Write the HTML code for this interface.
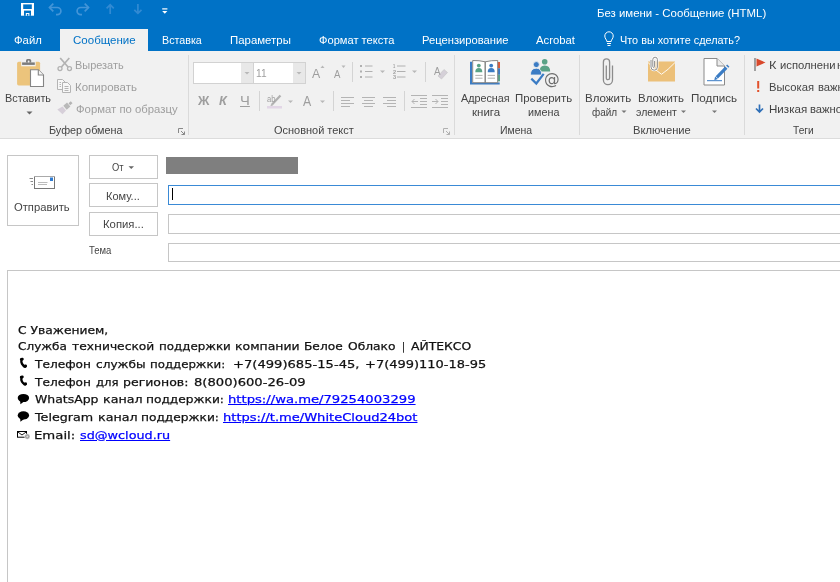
<!DOCTYPE html>
<html lang="ru"><head><meta charset="utf-8"><title>Без имени - Сообщение (HTML)</title>
<style>
*{box-sizing:border-box;margin:0;padding:0}
html,body{width:840px;height:582px;overflow:hidden;background:#fff}
body{position:relative;font-family:"Liberation Sans",sans-serif;font-size:11.5px;color:#444}
.abs{position:absolute;white-space:nowrap}
#title{left:0;top:0;width:840px;height:51px;background:#0072c6}
#ribbon{left:0;top:51px;width:840px;height:88px;background:#f1f1f1;border-bottom:1px solid #dcdcdc}
.tab{color:#fff;font-size:11.5px;top:33px;line-height:14px}
#tabsel{left:60px;top:28.5px;width:88px;height:22.5px;background:#f1f1f1}
.rt{font-size:11.5px;line-height:14px;color:#444}
.dis{color:#a0a0a0}
.sep{width:1px;background:#dadada;top:55px;height:80px}
.btn{border:1px solid #c6c6c6;background:#fff;text-align:center;color:#444;font-size:11.5px}
.fld{border:1px solid #c6c6c6;background:#fff;left:168px;width:680px}
#msg{left:7px;top:270px;width:840px;height:320px;border:1px solid #c6c6c6;background:#fff}
#sig{left:17px;top:322px;font-family:"DejaVu Sans","Liberation Sans",sans-serif;font-size:11px;line-height:17.5px;color:#000}
#sig a{color:#0000ee}
.sg{font-family:"DejaVu Sans","Liberation Sans",sans-serif;font-size:11.5px;line-height:16px;color:#111;transform-origin:0 0}
.lk{color:#0000ee;text-decoration:underline}
</style></head><body><div id="root" style="position:absolute;left:0;top:0;width:840px;height:582px;will-change:transform">
<div id="title" class="abs"></div>
<div id="tabsel" class="abs"></div>
<div id="ribbon" class="abs"></div>

<!-- QAT -->
<svg class="abs" style="left:0;top:0" width="200" height="28" viewBox="0 0 200 28">
<rect x="21" y="3" width="13" height="12.700" fill="#fff"/>
<rect x="23.200" y="4.400" width="8.600" height="4.600" fill="#0072c6"/>
<rect x="24" y="10.600" width="7" height="5.200" fill="#0072c6"/>
<rect x="25.800" y="13" width="3.600" height="2.800" fill="#fff"/><rect x="26.900" y="14" width="1.400" height="1.800" fill="#0072c6"/>
<g fill="none" stroke="#4395d8" stroke-width="1.700">
<path d="M49.500 7.500 H57.300 A3.600 3.600 0 0 1 57.300 14.700 H56"/><path d="M53.300 3.700 L49.500 7.500 L53.300 11.300"/>
<path d="M88.500 7.500 H80.700 A3.600 3.600 0 0 0 80.700 14.700 H82"/><path d="M84.700 3.700 L88.500 7.500 L84.700 11.300"/>
</g>
<g fill="none" stroke="#318ad3" stroke-width="1.700">
<path d="M110.200 14 V4.800 M106.600 8.400 L110.200 4.800 L113.800 8.400"/>
<path d="M137.900 4 V13.400 M134.300 9.800 L137.900 13.400 L141.500 9.800"/>
</g>
<rect x="162.200" y="8.300" width="5.200" height="1.200" fill="#fff"/><path d="M162.200 10.900 H167.400 L164.800 13.700 Z" fill="#fff"/>
</svg>
<!-- lightbulb -->
<svg class="abs" style="left:603px;top:31px" width="12" height="16" viewBox="0 0 12 16"><g fill="none" stroke="#fff" stroke-width="1"><path d="M3.8 10.5 C3.8 8.5 1.8 7.8 1.8 5 A4.2 4.2 0 0 1 10.2 5 C10.2 7.8 8.2 8.5 8.2 10.5 Z"/><path d="M4 12.5 L8 12.5 M4.5 14.5 L7.5 14.5"/></g></svg>
<!-- Clipboard group -->
<svg class="abs" style="left:14px;top:56px" width="34" height="34" viewBox="14 56 34 34">
<rect x="17.100" y="61.700" width="23" height="23.700" rx="1.600" fill="#ecc47c"/>
<rect x="21.200" y="61" width="14.500" height="5.300" fill="#f1f1f1"/>
<rect x="22.100" y="62.400" width="12.700" height="2.500" fill="#7c7c7c"/><path d="M26 62.600 V60.600 Q26 59.100 27.500 59.100 H29.700 Q31.200 59.100 31.200 60.600 V62.600 Z" fill="#7c7c7c"/><circle cx="28.600" cy="61.500" r="0.900" fill="#f1f1f1"/>
<path d="M30.500 69.800 H38.300 L43.500 75 V86.500 H30.500 Z" fill="#fff" stroke="#858585" stroke-width="1.100"/><path d="M38.300 69.800 V75 H43.500" fill="#f4f4f4" stroke="#858585" stroke-width="1.100"/>
</svg>
<svg class="abs" style="left:26px;top:110.500px" width="7" height="4"><path d="M0.5 0.5 L6.5 0.5 L3.5 3.5 Z" fill="#666"/></svg>
<!-- scissors -->
<svg class="abs" style="left:56px;top:56px" width="18" height="17" viewBox="56 56 18 17"><g fill="none" stroke="#b2b2b2"><path d="M60.200 58 L68.300 67.300 M69.300 58 L61.200 67.300" stroke-width="1.700"/><circle cx="60" cy="68.600" r="2" stroke-width="1.300"/><circle cx="69.500" cy="68.600" r="2" stroke-width="1.300"/></g></svg>
<!-- copy -->
<svg class="abs" style="left:57px;top:79px" width="16" height="15" viewBox="0 0 16 15"><g fill="#f7f7f7" stroke="#b4b4b4" stroke-width="1"><path d="M0.5 0.5 L5.5 0.5 L8.5 3.5 L8.5 10.5 L0.5 10.5 Z"/><path d="M5.5 3.5 L10.5 3.5 L13.5 6.5 L13.5 13.5 L5.5 13.5 Z"/></g><path d="M7.5 7.5 H11.5 M7.5 9.5 H11.5 M7.5 11.5 H11.5 M2.5 3.5 H4 M2.5 5.5 H4 M2.5 7.5 H4" stroke="#b4b4b4" stroke-width="1"/></svg>
<!-- brush -->
<svg class="abs" style="left:56px;top:100px" width="18" height="16" viewBox="56 100 18 16"><path d="M68.500 103.300 L70.800 101.300 L72.500 103.200 L70.200 105.200 Z" fill="#b4b4b4"/><path d="M63.300 105.800 L67 102.600 L70.400 106.500 L66.700 109.700 Z" fill="#b9b9b9"/><path d="M62.600 106.600 L66 110.500 L62.500 114.300 L57.300 109.400 Z" fill="#d6cfd9"/></svg>
<svg class="abs" style="left:178px;top:128px" width="8" height="8" viewBox="0 0 8 8"><path d="M0.500 5 V0.500 H5" fill="none" stroke="#888" stroke-width="1"/><path d="M3 3 L6.500 6.500 M6.500 3.500 V6.500 H3.500" fill="none" stroke="#888" stroke-width="1"/></svg>
<div class="abs sep" style="left:188px"></div>

<!-- Basic text group -->
<div class="abs" style="left:193px;top:62px;width:61px;height:22px;border:1px solid #d2d2d2;background:#fff"></div>
<div class="abs" style="left:241px;top:63px;width:12px;height:20px;background:#e8e8e8"></div>
<div class="abs" style="left:253px;top:62px;width:53px;height:22px;border:1px solid #d2d2d2;background:#fff"></div>
<div class="abs" style="left:293px;top:63px;width:12px;height:20px;background:#e8e8e8"></div>
<svg class="abs" style="left:185px;top:52px" width="270" height="70" viewBox="185 52 270 70">
<g fill="#b8b8b8"><path d="M244.5 72 h5 l-2.5 2.6z"/><path d="M296.5 72 h5 l-2.5 2.6z"/>
<path d="M288 100.5 h5 l-2.5 2.6z"/><path d="M320 100.5 h5 l-2.5 2.6z"/><path d="M380 70.5 h5 l-2.5 2.6z"/><path d="M412 70.5 h5 l-2.5 2.6z"/>
<path d="M320.5 68 h4 l-2 -2.4z"/><path d="M341.5 65.6 h4 l-2 2.4z"/></g>
<g stroke="#d4d4d4" stroke-width="1"><path d="M259.5 91 V111 M333.5 91 V111 M404.5 91 V111 M352.5 62 V82 M425.5 62 V82"/></g>
<!-- bullets -->
<g fill="#b0b0b0"><rect x="360" y="65" width="2" height="2"/><rect x="360" y="70.5" width="2" height="2"/><rect x="360" y="76" width="2" height="2"/></g>
<g stroke="#b0b0b0" stroke-width="1"><path d="M365 66 H372.5 M365 71.5 H372.5 M365 77 H372.5"/><path d="M397 66 H405.5 M397 71.5 H405.5 M397 77 H405.5"/></g>
<!-- align -->
<g stroke="#b4b4b4" stroke-width="1"><path d="M341 97.5 H354 M341 100.5 H350 M341 103.5 H354 M341 106.5 H350"/><path d="M362 97.5 H375 M364 100.5 H373 M362 103.5 H375 M364 106.5 H373"/><path d="M383 97.5 H396 M387 100.5 H396 M383 103.5 H396 M387 106.5 H396"/>
<path d="M411 95.5 H427 M411 107.5 H427 M420 98.5 H427 M420 101.5 H427 M420 104.5 H427"/><path d="M432 95.5 H448 M432 107.5 H448 M441 98.5 H448 M441 101.5 H448 M441 104.5 H448"/>
<path d="M418 101.5 H412 M414.5 99 L412 101.5 L414.5 104" fill="none"/><path d="M432 101.5 H438 M435.5 99 L438 101.5 L435.5 104" fill="none"/></g>
<!-- highlight -->
<rect x="267" y="106" width="15" height="2.5" fill="#e2d6e6"/>
<path d="M272 104.5 L280.5 95.5" stroke="#b0b0b0" stroke-width="2.2"/><path d="M270.5 106 l2.5 -0.5 l-1.8 -1.8z" fill="#b0b0b0"/>
<!-- eraser -->
<path d="M438 76 L444 69.500 L447.500 72.500 L441.500 79 Z" fill="#d5d0d8" stroke="#c4c4c4" stroke-width="0.6"/>
</svg>
<svg class="abs" style="left:443px;top:128px" width="8" height="8" viewBox="0 0 8 8"><path d="M0.5 5 V0.5 H5" fill="none" stroke="#b0b0b0" stroke-width="1"/><path d="M3 3 L6.5 6.500 M6.500 3.500 V6.500 H3.500" fill="none" stroke="#b0b0b0" stroke-width="1"/></svg>
<div class="abs sep" style="left:454px"></div>
<!-- Names group -->
<svg class="abs" style="left:468px;top:56px" width="36" height="32" viewBox="468 56 36 32">
<rect x="497" y="62" width="3" height="6.300" fill="#dc5a3a"/><rect x="497" y="68.300" width="3" height="6.500" fill="#3b7cc4"/><rect x="497" y="74.800" width="3" height="6.500" fill="#5aa387"/>
<path d="M471 61.700 V83.400 H499.700" fill="none" stroke="#3b7cc4" stroke-width="2"/>
<path d="M472.700 60.500 Q479 60.300 485.200 61.800 V82.700 H472.700 Z M485.200 61.800 Q491.500 60.300 497.700 60.500 V82.700 H485.200 Z" fill="#fff" stroke="#7a7a7a" stroke-width="0.9"/>
<circle cx="478.800" cy="65.600" r="1.900" fill="#5aa387"/><path d="M475.300 72.200 q0 -4.200 3.500 -4.200 q3.500 0 3.500 4.200z" fill="#5aa387"/>
<circle cx="491.200" cy="65.600" r="1.900" fill="#3b7cc4"/><path d="M487.700 72.200 q0 -4.200 3.500 -4.200 q3.500 0 3.500 4.200z" fill="#3b7cc4"/>
<path d="M475.300 75.400 H482.500 M475.300 78.200 H482.500 M487.700 75.400 H495 M487.700 78.200 H495" stroke="#9a9a9a" stroke-width="0.8"/>
</svg>
<svg class="abs" style="left:528px;top:56px" width="34" height="34" viewBox="528 56 34 34">
<circle cx="544.700" cy="61.800" r="2.800" fill="#5aa387"/><path d="M539.600 71.500 q0 -6 5.100 -6 q5.500 0 5.500 6z" fill="#5aa387"/>
<circle cx="536.300" cy="64.600" r="3" fill="#3b7cc4" stroke="#f1f1f1" stroke-width="0.800"/><path d="M530.400 75 q0 -6.800 5.900 -6.800 q5.400 0 5.400 6.800z" fill="#3b7cc4" stroke="#f1f1f1" stroke-width="0.800"/>
<path d="M531.300 78.600 L536.300 83.500 L543.700 73.800" fill="none" stroke="#3b7cc4" stroke-width="2.200"/>
<circle cx="552.200" cy="79.800" r="7.600" fill="#f1f1f1"/>
</svg>
<div class="abs sep" style="left:579px"></div>
<!-- Include group -->
<svg class="abs" style="left:598px;top:56px" width="20" height="32" viewBox="598 56 20 32"><path d="M612.500 65.400 V80 A4.550 4.550 0 0 1 603.400 80 V62 A3.100 3.100 0 0 1 609.600 62 V78 A1.650 1.650 0 0 1 606.300 78 V65.400" fill="none" stroke="#8c8c8c" stroke-width="1.300"/></svg>
<svg class="abs" style="left:646px;top:55px" width="32" height="30" viewBox="646 55 32 30">
<rect x="648" y="61.500" width="27" height="20" fill="#ecc079"/><path d="M648 62.500 Q655 70 661.500 74.300 Q668 70 675 62.500" fill="none" stroke="#fff" stroke-width="0.9"/>
<path d="M651 60 V67 a3.200 3.200 0 0 0 6.400 0 V59.500 a2.300 2.300 0 0 0 -4.600 0 V66.500 a0.900 0.900 0 0 0 1.800 0 V61" fill="none" stroke="#fff" stroke-width="2.200"/>
<path d="M651 60 V67 a3.200 3.200 0 0 0 6.400 0 V59.500 a2.300 2.300 0 0 0 -4.600 0 V66.500 a0.900 0.900 0 0 0 1.800 0 V61" fill="none" stroke="#808080" stroke-width="0.9"/>
</svg>
<svg class="abs" style="left:702px;top:57px" width="30" height="30" viewBox="0 0 30 30">
<path d="M2 1.500 H15 L22.500 9 V28 H2 Z" fill="#fff" stroke="#8a8a8a" stroke-width="1"/><path d="M15 1.500 V9 H22.500" fill="#ececec" stroke="#8a8a8a" stroke-width="1"/>
<path d="M5 23.700 H20" stroke="#3b7cc4" stroke-width="1"/><path d="M14.800 20.300 L24.300 10.600" stroke="#3b7cc4" stroke-width="3.200"/><path d="M25.200 9.700 L26.300 8.600" stroke="#3b7cc4" stroke-width="3.200"/><path d="M12.300 23.200 l0.800 -3.600 l2.700 2.500z" fill="#3b7cc4"/>
</svg>
<svg class="abs" style="left:600px;top:100px" width="130" height="16" viewBox="600 100 130 16"><g fill="#777"><path d="M621.500 110.500 h5 l-2.500 2.600z"/><path d="M681 110.500 h5 l-2.500 2.600z"/><path d="M712 110.500 h5 l-2.500 2.600z"/></g></svg>
<div class="abs sep" style="left:744px"></div>
<!-- Tags group -->
<svg class="abs" style="left:752px;top:56px" width="16" height="60" viewBox="752 56 16 60">
<path d="M755 58 V71" stroke="#6a6a6a" stroke-width="1.200"/><path d="M756.500 58.500 L765.500 62.500 L756.500 66.500 Z" fill="#d8482b"/>
<rect x="757.200" y="81" width="2" height="7.500" fill="#e2522c"/><rect x="757.200" y="90" width="2" height="2" fill="#e2522c"/>
<path d="M759.500 104.500 V112 M756 108.500 L759.500 112 L763 108.500" fill="none" stroke="#2f6fb7" stroke-width="1.700"/>
</svg>
<!-- fields -->
<div class="abs btn" style="left:7px;top:155px;width:72px;height:71px"></div>
<div class="abs btn" style="left:89px;top:155px;width:69px;height:24px;line-height:22px"></div>
<div class="abs btn" style="left:89px;top:183px;width:69px;height:24px;line-height:22px"></div>
<div class="abs btn" style="left:89px;top:212px;width:69px;height:24px;line-height:22px"></div>
<div class="abs" style="left:166px;top:157px;width:132px;height:17px;background:#7f7f7f"></div>
<div class="abs fld" style="top:185px;height:20px;border-color:#3a8ad6"></div>
<div class="abs fld" style="top:214px;height:20px"></div>
<div class="abs fld" style="top:243px;height:19px"></div>
<div id="msg" class="abs"></div>

<!-- send icon -->
<svg class="abs" style="left:28px;top:174px" width="30" height="17" viewBox="28 174 30 17">
<rect x="34.500" y="176.500" width="20" height="12" fill="#fff" stroke="#777" stroke-width="1"/><path d="M34 176.500 H55" stroke="#aaa" stroke-width="1"/>
<rect x="50" y="177.500" width="3" height="3.500" fill="#2f7bd0"/>
<path d="M38 182.500 H47.500 M38 184.500 H47" stroke="#aaa" stroke-width="0.8"/>
<path d="M29.500 178.500 H33 M30.500 181.500 H33 M31.500 184.500 H33" stroke="#8a8a8a" stroke-width="1"/>
</svg>
<svg class="abs" style="left:128px;top:166px" width="7" height="4"><path d="M0.500 0.300 L6 0.300 L3.250 3.100 Z" fill="#666"/></svg>
<div class="abs" style="left:172px;top:188px;width:1px;height:12px;background:#000"></div>
<!-- sig icons -->
<svg class="abs" style="left:14px;top:355px" width="20" height="90" viewBox="14 355 20 90">
<g fill="none" stroke="#000" stroke-linecap="round">
<path d="M21.600 359.700 C20.600 362.500 22.500 365.800 25.200 366.600" stroke-width="2.300"/><path d="M21.300 359.300 L22.300 359.100 M24.600 366.300 L25.600 366" stroke-width="2.900"/>
<path d="M21.600 377.500 C20.600 380.300 22.500 383.600 25.200 384.400" stroke-width="2.300"/><path d="M21.300 377.100 L22.300 376.900 M24.600 384.100 L25.600 383.800" stroke-width="2.900"/>
</g>
<ellipse cx="23.400" cy="398" rx="5.700" ry="4.100" fill="#000"/><path d="M20.200 400.500 L20.400 404.300 L24 401.500 Z" fill="#000"/>
<ellipse cx="23.400" cy="415.400" rx="5.700" ry="4.100" fill="#000"/><path d="M20.200 417.900 L20.400 421.700 L24 418.900 Z" fill="#000"/>
<rect x="17.500" y="431.500" width="9" height="5.700" fill="#fff" stroke="#000" stroke-width="1"/><path d="M17.500 431.700 L22 435 L26.500 431.700" fill="none" stroke="#000" stroke-width="0.9"/>
<circle cx="27.300" cy="436.500" r="2.700" fill="#9c9c9c" stroke="#fff" stroke-width="0.600"/><circle cx="27.300" cy="436.500" r="1" fill="#dcdcdc"/>
</svg>
<div class="abs" style="left:597.03px;top:5.00px;font-family:'Liberation Sans',sans-serif;font-size:11.8px;line-height:16px;color:#fff;transform:scaleX(0.9667);transform-origin:0 0">Без имени - Сообщение (HTML)</div>
<div class="abs" style="left:14.30px;top:32.00px;font-family:'Liberation Sans',sans-serif;font-size:11.8px;line-height:16px;color:#fff;transform:scaleX(0.9607);transform-origin:0 0">Файл</div>
<div class="abs" style="left:72.50px;top:32.00px;font-family:'Liberation Sans',sans-serif;font-size:11.8px;line-height:16px;color:#0072c6;transform:scaleX(0.9766);transform-origin:0 0">Сообщение</div>
<div class="abs" style="left:162.09px;top:32.00px;font-family:'Liberation Sans',sans-serif;font-size:11.8px;line-height:16px;color:#fff;transform:scaleX(0.9070);transform-origin:0 0">Вставка</div>
<div class="abs" style="left:229.53px;top:32.00px;font-family:'Liberation Sans',sans-serif;font-size:11.8px;line-height:16px;color:#fff;transform:scaleX(0.9677);transform-origin:0 0">Параметры</div>
<div class="abs" style="left:318.80px;top:32.00px;font-family:'Liberation Sans',sans-serif;font-size:11.8px;line-height:16px;color:#fff;transform:scaleX(0.9425);transform-origin:0 0">Формат текста</div>
<div class="abs" style="left:421.55px;top:32.00px;font-family:'Liberation Sans',sans-serif;font-size:11.8px;line-height:16px;color:#fff;transform:scaleX(0.9500);transform-origin:0 0">Рецензирование</div>
<div class="abs" style="left:536.20px;top:32.00px;font-family:'Liberation Sans',sans-serif;font-size:11.8px;line-height:16px;color:#fff;transform:scaleX(0.9585);transform-origin:0 0">Acrobat</div>
<div class="abs" style="left:619.58px;top:32.00px;font-family:'Liberation Sans',sans-serif;font-size:11.8px;line-height:16px;color:#fff;transform:scaleX(0.9202);transform-origin:0 0">Что вы хотите сделать?</div>
<div class="abs" style="left:4.98px;top:89.50px;font-family:'Liberation Sans',sans-serif;font-size:11.8px;line-height:16px;color:#444;transform:scaleX(0.9204);transform-origin:0 0">Вставить</div>
<div class="abs" style="left:74.77px;top:57.00px;font-family:'Liberation Sans',sans-serif;font-size:11.8px;line-height:16px;color:#9e9e9e;transform:scaleX(0.9275);transform-origin:0 0">Вырезать</div>
<div class="abs" style="left:74.72px;top:79.20px;font-family:'Liberation Sans',sans-serif;font-size:11.8px;line-height:16px;color:#9e9e9e;transform:scaleX(0.9758);transform-origin:0 0">Копировать</div>
<div class="abs" style="left:75.70px;top:100.70px;font-family:'Liberation Sans',sans-serif;font-size:11.8px;line-height:16px;color:#9e9e9e;transform:scaleX(0.9604);transform-origin:0 0">Формат по образцу</div>
<div class="abs" style="left:49.08px;top:122.00px;font-family:'Liberation Sans',sans-serif;font-size:11.8px;line-height:16px;color:#444;transform:scaleX(0.9177);transform-origin:0 0">Буфер обмена</div>
<div class="abs" style="left:256.14px;top:64.70px;font-family:'Liberation Sans',sans-serif;font-size:11.8px;line-height:16px;color:#9e9e9e;transform:scaleX(0.8636);transform-origin:0 0">11</div>
<div class="abs" style="left:274.30px;top:122.00px;font-family:'Liberation Sans',sans-serif;font-size:11.8px;line-height:16px;color:#444;transform:scaleX(0.9302);transform-origin:0 0">Основной текст</div>
<div class="abs" style="left:461.30px;top:89.70px;font-family:'Liberation Sans',sans-serif;font-size:11.8px;line-height:16px;color:#444;transform:scaleX(0.9132);transform-origin:0 0">Адресная</div>
<div class="abs" style="left:471.70px;top:104.20px;font-family:'Liberation Sans',sans-serif;font-size:11.8px;line-height:16px;color:#444;transform:scaleX(0.9759);transform-origin:0 0">книга</div>
<div class="abs" style="left:514.53px;top:89.70px;font-family:'Liberation Sans',sans-serif;font-size:11.8px;line-height:16px;color:#444;transform:scaleX(0.9690);transform-origin:0 0">Проверить</div>
<div class="abs" style="left:528.00px;top:104.20px;font-family:'Liberation Sans',sans-serif;font-size:11.8px;line-height:16px;color:#444;transform:scaleX(0.9143);transform-origin:0 0">имена</div>
<div class="abs" style="left:499.61px;top:122.00px;font-family:'Liberation Sans',sans-serif;font-size:11.8px;line-height:16px;color:#444;transform:scaleX(0.8889);transform-origin:0 0">Имена</div>
<div class="abs" style="left:584.72px;top:89.70px;font-family:'Liberation Sans',sans-serif;font-size:11.8px;line-height:16px;color:#444;transform:scaleX(0.9783);transform-origin:0 0">Вложить</div>
<div class="abs" style="left:592.00px;top:104.20px;font-family:'Liberation Sans',sans-serif;font-size:11.8px;line-height:16px;color:#444;transform:scaleX(0.8448);transform-origin:0 0">файл</div>
<div class="abs" style="left:637.93px;top:89.70px;font-family:'Liberation Sans',sans-serif;font-size:11.8px;line-height:16px;color:#444;transform:scaleX(0.9717);transform-origin:0 0">Вложить</div>
<div class="abs" style="left:636.00px;top:104.20px;font-family:'Liberation Sans',sans-serif;font-size:11.8px;line-height:16px;color:#444;transform:scaleX(0.8913);transform-origin:0 0">элемент</div>
<div class="abs" style="left:691.41px;top:89.70px;font-family:'Liberation Sans',sans-serif;font-size:11.8px;line-height:16px;color:#444;transform:scaleX(0.9867);transform-origin:0 0">Подпись</div>
<div class="abs" style="left:632.95px;top:122.00px;font-family:'Liberation Sans',sans-serif;font-size:11.8px;line-height:16px;color:#444;transform:scaleX(0.9467);transform-origin:0 0">Включение</div>
<div class="abs" style="left:768.92px;top:56.90px;font-family:'Liberation Sans',sans-serif;font-size:11.8px;line-height:16px;color:#444;transform:scaleX(1.0833);transform-origin:0 0">К</div>
<div class="abs" style="left:780.10px;top:56.90px;font-family:'Liberation Sans',sans-serif;font-size:11.8px;line-height:16px;color:#444;transform:scaleX(0.9534);transform-origin:0 0">исполнени</div>
<div class="abs" style="left:837.00px;top:56.90px;font-family:'Liberation Sans',sans-serif;font-size:11.8px;line-height:16px;color:#444;transform:scaleX(0.9500);transform-origin:0 0">ю</div>
<div class="abs" style="left:769.05px;top:78.70px;font-family:'Liberation Sans',sans-serif;font-size:11.8px;line-height:16px;color:#444;transform:scaleX(0.9522);transform-origin:0 0">Высокая</div>
<div class="abs" style="left:818.00px;top:78.70px;font-family:'Liberation Sans',sans-serif;font-size:11.8px;line-height:16px;color:#444;transform:scaleX(0.9500);transform-origin:0 0">важность</div>
<div class="abs" style="left:769.02px;top:100.60px;font-family:'Liberation Sans',sans-serif;font-size:11.8px;line-height:16px;color:#444;transform:scaleX(0.9811);transform-origin:0 0">Низкая</div>
<div class="abs" style="left:810.40px;top:100.60px;font-family:'Liberation Sans',sans-serif;font-size:11.8px;line-height:16px;color:#444;transform:scaleX(0.9500);transform-origin:0 0">важность</div>
<div class="abs" style="left:793.10px;top:122.00px;font-family:'Liberation Sans',sans-serif;font-size:11.8px;line-height:16px;color:#444;transform:scaleX(0.8625);transform-origin:0 0">Теги</div>
<div class="abs" style="left:13.80px;top:198.70px;font-family:'Liberation Sans',sans-serif;font-size:11.8px;line-height:16px;color:#444;transform:scaleX(0.9517);transform-origin:0 0">Отправить</div>
<div class="abs" style="left:111.90px;top:158.70px;font-family:'Liberation Sans',sans-serif;font-size:11.8px;line-height:16px;color:#444;transform:scaleX(0.7933);transform-origin:0 0">От</div>
<div class="abs" style="left:105.77px;top:187.50px;font-family:'Liberation Sans',sans-serif;font-size:11.8px;line-height:16px;color:#444;transform:scaleX(0.9314);transform-origin:0 0">Кому...</div>
<div class="abs" style="left:102.64px;top:216.00px;font-family:'Liberation Sans',sans-serif;font-size:11.8px;line-height:16px;color:#444;transform:scaleX(0.9585);transform-origin:0 0">Копия...</div>
<div class="abs" style="left:89.30px;top:242.30px;font-family:'Liberation Sans',sans-serif;font-size:11.8px;line-height:16px;color:#444;transform:scaleX(0.8071);transform-origin:0 0">Тема</div>
<div class="abs" style="left:197.50px;top:93.00px;font-family:'Liberation Sans',sans-serif;font-size:12px;line-height:16px;color:#9e9e9e;font-weight:bold;transform:scaleX(1.0455);transform-origin:0 0">Ж</div>
<div class="abs" style="left:219.00px;top:93.00px;font-family:'Liberation Sans',sans-serif;font-size:12px;line-height:16px;color:#9e9e9e;font-weight:bold;font-style:italic;transform:scaleX(1.0625);transform-origin:0 0">К</div>
<div class="abs" style="left:239.97px;top:93.00px;font-family:'Liberation Sans',sans-serif;font-size:12px;line-height:16px;color:#9e9e9e;text-decoration:underline;transform:scaleX(1.2333);transform-origin:0 0">Ч</div>
<div class="abs" style="left:267.00px;top:91.00px;font-family:'Liberation Sans',sans-serif;font-size:9px;line-height:16px;color:#9e9e9e;transform:scaleX(0.8500);transform-origin:0 0">ab</div>
<div class="abs" style="left:302.80px;top:92.80px;font-family:'Liberation Sans',sans-serif;font-size:14px;line-height:16px;color:#9e9e9e;transform:scaleX(0.8800);transform-origin:0 0">A</div>
<div class="abs" style="left:312.40px;top:65.70px;font-family:'Liberation Sans',sans-serif;font-size:13.5px;line-height:16px;color:#9e9e9e;transform:scaleX(0.9111);transform-origin:0 0">A</div>
<div class="abs" style="left:334.00px;top:65.70px;font-family:'Liberation Sans',sans-serif;font-size:11px;line-height:16px;color:#9e9e9e;transform:scaleX(0.8750);transform-origin:0 0">A</div>
<div class="abs" style="left:434.00px;top:62.50px;font-family:'Liberation Sans',sans-serif;font-size:10.5px;line-height:16px;color:#9e9e9e;transform:scaleX(0.9286);transform-origin:0 0">A</div>
<div class="abs" style="left:393.00px;top:58.00px;font-family:'Liberation Sans',sans-serif;font-size:6px;line-height:16px;color:#9e9e9e;font-weight:bold;transform:scaleX(0.6667);transform-origin:0 0">1</div>
<div class="abs" style="left:392.60px;top:63.50px;font-family:'Liberation Sans',sans-serif;font-size:6px;line-height:16px;color:#9e9e9e;font-weight:bold;transform:scaleX(0.9333);transform-origin:0 0">2</div>
<div class="abs" style="left:392.60px;top:69.00px;font-family:'Liberation Sans',sans-serif;font-size:6px;line-height:16px;color:#9e9e9e;font-weight:bold;transform:scaleX(0.9333);transform-origin:0 0">3</div>
<div class="abs" style="left:544.35px;top:71.30px;font-family:'DejaVu Sans','Liberation Sans',sans-serif;font-size:15px;line-height:16px;color:#6e6e6e;transform:scaleX(1.0462);transform-origin:0 0">@</div>
<div class="abs" style="left:17.60px;top:322.80px;font-family:'DejaVu Sans','Liberation Sans',sans-serif;font-size:11.2px;line-height:16px;color:#111;-webkit-text-stroke:0.25px;transform:scaleX(1.1000);transform-origin:0 0">С Уважением,</div>
<div class="abs" style="left:17.90px;top:339.30px;font-family:'DejaVu Sans','Liberation Sans',sans-serif;font-size:11.2px;line-height:16px;color:#111;-webkit-text-stroke:0.25px;transform:scaleX(1.0778);transform-origin:0 0">Служба</div>
<div class="abs" style="left:72.10px;top:339.30px;font-family:'DejaVu Sans','Liberation Sans',sans-serif;font-size:11.2px;line-height:16px;color:#111;-webkit-text-stroke:0.25px;transform:scaleX(1.0946);transform-origin:0 0">технической</div>
<div class="abs" style="left:158.94px;top:339.30px;font-family:'DejaVu Sans','Liberation Sans',sans-serif;font-size:11.2px;line-height:16px;color:#111;-webkit-text-stroke:0.25px;transform:scaleX(1.0606);transform-origin:0 0">поддержки</div>
<div class="abs" style="left:234.89px;top:339.30px;font-family:'DejaVu Sans','Liberation Sans',sans-serif;font-size:11.2px;line-height:16px;color:#111;-webkit-text-stroke:0.25px;transform:scaleX(1.1125);transform-origin:0 0">компании</div>
<div class="abs" style="left:303.91px;top:339.30px;font-family:'DejaVu Sans','Liberation Sans',sans-serif;font-size:11.2px;line-height:16px;color:#111;-webkit-text-stroke:0.25px;transform:scaleX(1.0912);transform-origin:0 0">Белое</div>
<div class="abs" style="left:347.50px;top:339.30px;font-family:'DejaVu Sans','Liberation Sans',sans-serif;font-size:11.2px;line-height:16px;color:#111;-webkit-text-stroke:0.25px;transform:scaleX(1.0977);transform-origin:0 0">Облако</div>
<div class="abs" style="left:401.60px;top:339.30px;font-family:'DejaVu Sans','Liberation Sans',sans-serif;font-size:11.2px;line-height:16px;color:#111;-webkit-text-stroke:0.25px;transform:scaleX(0.8000);transform-origin:0 0">|</div>
<div class="abs" style="left:410.80px;top:339.30px;font-family:'DejaVu Sans','Liberation Sans',sans-serif;font-size:11.2px;line-height:16px;color:#111;-webkit-text-stroke:0.25px;transform:scaleX(1.1037);transform-origin:0 0">АЙТЕКСО</div>
<div class="abs" style="left:34.60px;top:356.60px;font-family:'DejaVu Sans','Liberation Sans',sans-serif;font-size:11.2px;line-height:16px;color:#111;-webkit-text-stroke:0.25px;transform:scaleX(1.0863);transform-origin:0 0">Телефон</div>
<div class="abs" style="left:96.20px;top:356.60px;font-family:'DejaVu Sans','Liberation Sans',sans-serif;font-size:11.2px;line-height:16px;color:#111;-webkit-text-stroke:0.25px;transform:scaleX(1.0844);transform-origin:0 0">службы</div>
<div class="abs" style="left:150.15px;top:356.60px;font-family:'DejaVu Sans','Liberation Sans',sans-serif;font-size:11.2px;line-height:16px;color:#111;-webkit-text-stroke:0.25px;transform:scaleX(1.0514);transform-origin:0 0">поддержки:</div>
<div class="abs" style="left:233.03px;top:356.60px;font-family:'DejaVu Sans','Liberation Sans',sans-serif;font-size:11.2px;line-height:16px;color:#111;-webkit-text-stroke:0.25px;transform:scaleX(1.1708);transform-origin:0 0">+7(499)685-15-45,</div>
<div class="abs" style="left:364.64px;top:356.60px;font-family:'DejaVu Sans','Liberation Sans',sans-serif;font-size:11.2px;line-height:16px;color:#111;-webkit-text-stroke:0.25px;transform:scaleX(1.1602);transform-origin:0 0">+7(499)110-18-95</div>
<div class="abs" style="left:34.60px;top:374.50px;font-family:'DejaVu Sans','Liberation Sans',sans-serif;font-size:11.2px;line-height:16px;color:#111;-webkit-text-stroke:0.25px;transform:scaleX(1.0863);transform-origin:0 0">Телефон</div>
<div class="abs" style="left:95.50px;top:374.50px;font-family:'DejaVu Sans','Liberation Sans',sans-serif;font-size:11.2px;line-height:16px;color:#111;-webkit-text-stroke:0.25px;transform:scaleX(1.0476);transform-origin:0 0">для</div>
<div class="abs" style="left:122.68px;top:374.50px;font-family:'DejaVu Sans','Liberation Sans',sans-serif;font-size:11.2px;line-height:16px;color:#111;-webkit-text-stroke:0.25px;transform:scaleX(1.1175);transform-origin:0 0">регионов:</div>
<div class="abs" style="left:193.53px;top:374.50px;font-family:'DejaVu Sans','Liberation Sans',sans-serif;font-size:11.2px;line-height:16px;color:#111;-webkit-text-stroke:0.25px;transform:scaleX(1.1734);transform-origin:0 0">8(800)600-26-09</div>
<div class="abs" style="left:34.60px;top:392.30px;font-family:'DejaVu Sans','Liberation Sans',sans-serif;font-size:11.2px;line-height:16px;color:#111;-webkit-text-stroke:0.25px;transform:scaleX(1.1123);transform-origin:0 0">WhatsApp</div>
<div class="abs" style="left:102.67px;top:392.30px;font-family:'DejaVu Sans','Liberation Sans',sans-serif;font-size:11.2px;line-height:16px;color:#111;-webkit-text-stroke:0.25px;transform:scaleX(1.1333);transform-origin:0 0">канал</div>
<div class="abs" style="left:145.91px;top:392.30px;font-family:'DejaVu Sans','Liberation Sans',sans-serif;font-size:11.2px;line-height:16px;color:#111;-webkit-text-stroke:0.25px;transform:scaleX(1.0900);transform-origin:0 0">поддержки:</div>
<div class="abs" style="left:228.02px;top:392.30px;font-family:'DejaVu Sans','Liberation Sans',sans-serif;font-size:11.2px;line-height:16px;color:#0000ff;text-decoration:underline;-webkit-text-stroke:0.25px;transform:scaleX(1.1759);transform-origin:0 0">https://wa.me/79254003299</div>
<div class="abs" style="left:34.60px;top:409.80px;font-family:'DejaVu Sans','Liberation Sans',sans-serif;font-size:11.2px;line-height:16px;color:#111;-webkit-text-stroke:0.25px;transform:scaleX(1.1353);transform-origin:0 0">Telegram</div>
<div class="abs" style="left:97.67px;top:409.80px;font-family:'DejaVu Sans','Liberation Sans',sans-serif;font-size:11.2px;line-height:16px;color:#111;-webkit-text-stroke:0.25px;transform:scaleX(1.1333);transform-origin:0 0">канал</div>
<div class="abs" style="left:140.91px;top:409.80px;font-family:'DejaVu Sans','Liberation Sans',sans-serif;font-size:11.2px;line-height:16px;color:#111;-webkit-text-stroke:0.25px;transform:scaleX(1.0900);transform-origin:0 0">поддержки:</div>
<div class="abs" style="left:223.13px;top:409.80px;font-family:'DejaVu Sans','Liberation Sans',sans-serif;font-size:11.2px;line-height:16px;color:#0000ff;text-decoration:underline;-webkit-text-stroke:0.25px;transform:scaleX(1.1669);transform-origin:0 0">https://t.me/WhiteCloud24bot</div>
<div class="abs" style="left:33.52px;top:427.70px;font-family:'DejaVu Sans','Liberation Sans',sans-serif;font-size:11.2px;line-height:16px;color:#111;-webkit-text-stroke:0.25px;transform:scaleX(1.1848);transform-origin:0 0">Email:</div>
<div class="abs" style="left:79.70px;top:427.70px;font-family:'DejaVu Sans','Liberation Sans',sans-serif;font-size:11.2px;line-height:16px;color:#0000ff;text-decoration:underline;-webkit-text-stroke:0.25px;transform:scaleX(1.1436);transform-origin:0 0">sd@wcloud.ru</div>
</div></body></html>
